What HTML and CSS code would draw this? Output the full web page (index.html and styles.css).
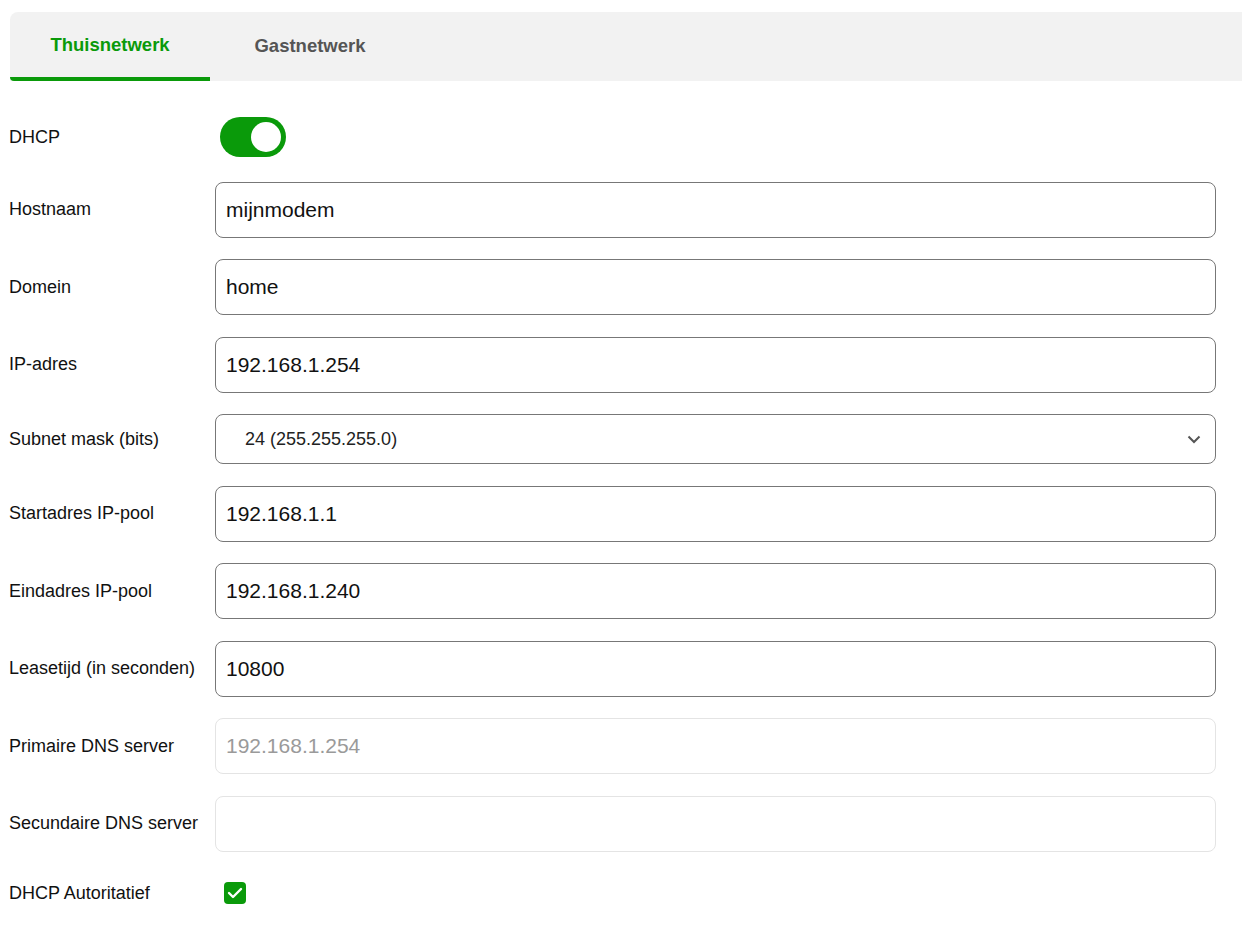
FILE: index.html
```html
<!DOCTYPE html>
<html lang="nl">
<head>
  <meta charset="UTF-8">
  <meta name="viewport" content="width=device-width, initial-scale=1">
  <title>Netwerk - DHCP</title>
  <link rel="stylesheet" href="styles.css">
</head>
<body>
  <div class="tabs">
    <button class="tab active">Thuisnetwerk</button>
    <button class="tab">Gastnetwerk</button>
  </div>

  <form class="form">
    <div class="row row-toggle">
      <label class="label">DHCP</label>
      <span class="toggle on"><span class="knob"></span></span>
    </div>
    <div class="row">
      <label class="label">Hostnaam</label>
      <input class="field" type="text" value="mijnmodem">
    </div>
    <div class="row">
      <label class="label">Domein</label>
      <input class="field" type="text" value="home">
    </div>
    <div class="row">
      <label class="label">IP-adres</label>
      <input class="field" type="text" value="192.168.1.254">
    </div>
    <div class="row">
      <label class="label">Subnet mask (bits)</label>
      <div class="select">
        <span>24 (255.255.255.0)</span>
        <svg class="chevron" width="14" height="9" viewBox="0 0 14 9"><path d="M1.5 1.5 L7 7 L12.5 1.5" fill="none" stroke="#555" stroke-width="2"/></svg>
      </div>
    </div>
    <div class="row">
      <label class="label">Startadres IP-pool</label>
      <input class="field" type="text" value="192.168.1.1">
    </div>
    <div class="row">
      <label class="label">Eindadres IP-pool</label>
      <input class="field" type="text" value="192.168.1.240">
    </div>
    <div class="row">
      <label class="label">Leasetijd (in seconden)</label>
      <input class="field" type="text" value="10800">
    </div>
    <div class="row">
      <label class="label">Primaire DNS server</label>
      <input class="field" type="text" placeholder="192.168.1.254" disabled>
    </div>
    <div class="row">
      <label class="label">Secundaire DNS server</label>
      <input class="field" type="text" disabled>
    </div>
    <div class="row row-check">
      <label class="label">DHCP Autoritatief</label>
      <span class="check">
        <svg width="16" height="12" viewBox="0 0 16 12"><path d="M2 6 L6 10 L14 2" fill="none" stroke="#fff" stroke-width="2.4" stroke-linecap="round" stroke-linejoin="round"/></svg>
      </span>
    </div>
  </form>
</body>
</html>
```

FILE: styles.css
```css
body {
  margin: 0;
  padding: 12px 0 0 0;
  font-family: 'Liberation Sans', Arial, sans-serif;
  color: #111;
  background: #fff;
}

.tabs {
  display: flex;
  margin-left: 10px;
  height: 69px;
  background: #f2f2f2;
  border-radius: 8px 0 0 0;
}

.tab {
  width: 200px;
  border: none;
  background: none;
  font-family: inherit;
  font-size: 18.5px;
  font-weight: bold;
  color: #555;
  padding: 0 0 2px 0;
  cursor: pointer;
}

.tab.active {
  color: #0a9a0a;
  border-bottom: 4px solid #0a9a0a;
  padding-bottom: 0;
  border-radius: 0 0 0 4px;
}

.form {
  padding: 36px 26px 0 9px;
  display: flex;
  flex-direction: column;
  gap: 21.5px;
}

.row {
  display: flex;
  align-items: center;
}

.label {
  width: 206px;
  flex-shrink: 0;
  font-size: 18px;
  color: #111;
}

.field {
  flex: 1;
  height: 56px;
  box-sizing: border-box;
  border: 1px solid #777;
  border-radius: 8px;
  padding: 0 10px;
  font-family: inherit;
  font-size: 21px;
  color: #111;
  background: #fff;
  outline: none;
}

.field:disabled {
  border-color: #e4e4e4;
  background: #fff;
}

.field::placeholder {
  color: #9a9a9a;
}

.select {
  flex: 1;
  height: 50px;
  box-sizing: border-box;
  border: 1px solid #777;
  border-radius: 8px;
  padding: 0 14px 0 29px;
  display: flex;
  align-items: center;
  justify-content: space-between;
  font-size: 18px;
  color: #222;
}

.row-toggle {
  height: 40px;
  margin-bottom: 3px;
}

.toggle {
  margin-left: 5px;
  width: 66px;
  height: 40px;
  border-radius: 20px;
  background: #0a9a0a;
  display: flex;
  align-items: center;
  justify-content: flex-end;
  padding: 0 5px;
  box-sizing: border-box;
}

.knob {
  width: 30px;
  height: 30px;
  border-radius: 50%;
  background: #fff;
}

.row-check {
  height: 30px;
  margin-top: 5px;
}

.check {
  margin-left: 9px;
  width: 22px;
  height: 22px;
  border-radius: 4px;
  background: #0a9a0a;
  display: flex;
  align-items: center;
  justify-content: center;
}
```
